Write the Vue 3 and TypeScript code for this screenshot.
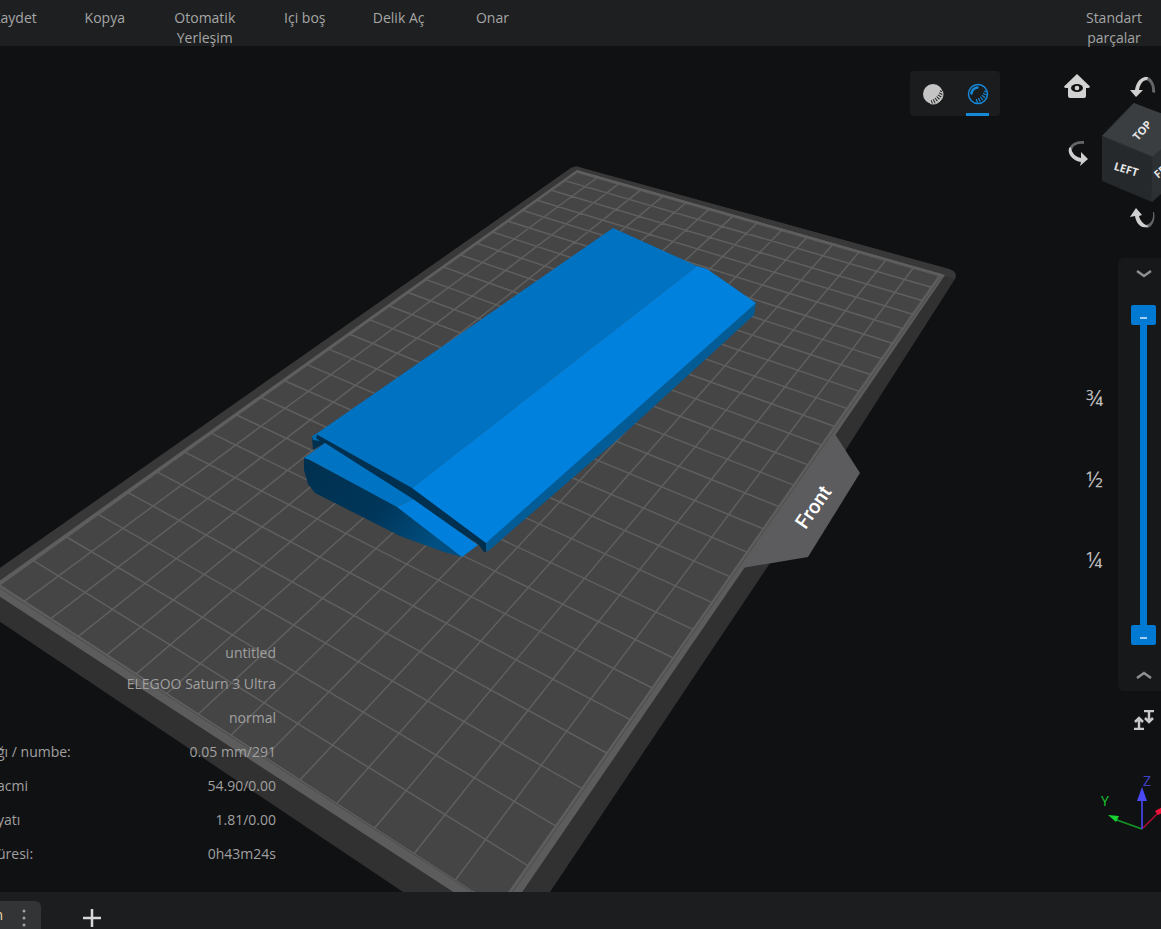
<script setup lang="ts">
import { computed, ref } from 'vue'

type Point = [number, number]

const tools = ['Kaydet', 'Kopya', 'Otomatik Yerleşim', 'Içi boş', 'Delik Aç', 'Onar']

const info = [
  { label: '', value: 'untitled' },
  { label: '', value: 'ELEGOO Saturn 3 Ultra' },
  { label: '', value: 'normal' },
  { label: 'ğı / numbe:', value: '0.05 mm/291' },
  { label: 'acmi', value: '54.90/0.00' },
  { label: 'yatı', value: '1.81/0.00' },
  { label: 'üresi:', value: '0h43m24s' },
]

const shading = ref<'solid' | 'glass'>('glass')
const upper = ref(291)
const lower = ref(0)

const trackStyle = computed(() => ({
  top: `${10 + (1 - upper.value / 291) * 320}px`,
  bottom: `${10 + (lower.value / 291) * 320}px`,
}))

// Build plate corners in view space: back, right, front, left
const plate: Point[] = [[577, 171], [942, 275], [498, 908], [-2, 585]]
const columns = 15
const rows = 27

// Projects a point of the unit square onto the plate
function project(u: number, v: number): Point {
  const [a, b, c, d] = plate
  const dx1 = b[0] - c[0]
  const dx2 = d[0] - c[0]
  const dx3 = a[0] - b[0] + c[0] - d[0]
  const dy1 = b[1] - c[1]
  const dy2 = d[1] - c[1]
  const dy3 = a[1] - b[1] + c[1] - d[1]
  const det = dx1 * dy2 - dx2 * dy1
  const g = (dx3 * dy2 - dx2 * dy3) / det
  const h = (dx1 * dy3 - dx3 * dy1) / det
  const w = g * u + h * v + 1
  return [
    ((b[0] - a[0] + g * b[0]) * u + (d[0] - a[0] + h * d[0]) * v + a[0]) / w,
    ((b[1] - a[1] + g * b[1]) * u + (d[1] - a[1] + h * d[1]) * v + a[1]) / w,
  ]
}

function segment(from: Point, to: Point): string {
  return `M${from[0].toFixed(1)} ${from[1].toFixed(1)}L${to[0].toFixed(1)} ${to[1].toFixed(1)}`
}

const gridPath = computed(() => {
  const parts: string[] = []
  for (let i = 0; i <= columns; i++) parts.push(segment(project(i / columns, 0), project(i / columns, 1)))
  for (let j = 0; j <= rows; j++) parts.push(segment(project(0, j / rows), project(1, j / rows)))
  return parts.join('')
})
</script>

<template>
  <div class="app">
    <header class="toolbar">
      <nav class="tools" aria-label="Araçlar">
        <button v-for="tool in tools" :key="tool" type="button" class="tool">{{ tool }}</button>
      </nav>
      <button type="button" class="tool parts">Standart parçalar</button>
    </header>

    <main class="viewport">
      <svg class="scene" viewBox="0 46 1161 846" preserveAspectRatio="xMidYMid slice" aria-hidden="true">
        <defs>
          <linearGradient id="side" x1="0" y1="0" x2="1" y2="0.5">
            <stop offset="0" stop-color="#00304f" />
            <stop offset="0.6" stop-color="#00365a" />
            <stop offset="1" stop-color="#004f80" />
          </linearGradient>
        </defs>
        <path d="M571 168Q576 165 582 168L949 269Q958 272 955 279L847 448L546 898L412 898L-10 615V575Z" fill="#313131" />
        <path d="M571 168Q576 165 582 168L949 269Q958 272 955 279L943 276L577 171L-2 586L-10 585V575Z" fill="#383838" />
        <path d="M577 170L945 275L501 923L-12 589Z" fill="#5c5c5c" />
        <path d="M577 173L938 276L498 908L1 585Z" fill="#454545" />
        <path :d="gridPath" stroke="#5f5f5f" stroke-width="1.5" fill="none" />
        <path d="M941 277L500 910L0 588" stroke="#4c4c4c" stroke-width="1" fill="none" />
        <path d="M835 434L860 473L808 557L742 568Z" fill="#5c5c5e" />
        <text class="front" text-anchor="middle" transform="translate(819 511) rotate(-55)">Front</text>

        <path d="M756 303L754 315L615 442L590 463L487 552L485 543Z" fill="#045c96" />
        <path d="M312 437L318 433L412 487L486 542V552H484L478 544L325 443L313 450Z" fill="#00304f" />
        <path d="M304 457L397 506L462 557L444 552L400 536L315 493L308 484L304 470Z" fill="url(#side)" />
        <path d="M325 443L304 458L310 460L397 507L413 499Z" fill="#0073c2" />
        <path d="M413 499L397 507L462 557L478 545Z" fill="#0080dc" />
        <path d="M613 228L697 266L412 488L316 434Z" fill="#0072c2" />
        <path d="M697 266L707 269L756 303L486 543L412 488Z" fill="#0081de" />
        <path d="M312 436L318 433L316 438L320 441L313 440Z" fill="#006baf" />
      </svg>

      <div class="shading" role="group" aria-label="Görünüm">
        <button type="button" :class="['mode', { active: shading === 'solid' }]" aria-label="Katı" @click="shading = 'solid'">
          <svg width="22" height="22" viewBox="0 0 22 22">
            <circle cx="11" cy="11" r="10" fill="#c4c4c4" />
            <path d="M20 8C18 14 14 18 8 19.500" fill="none" stroke="#1b1c1d" stroke-width="4" stroke-dasharray="1 1.500" />
            <path d="M20.500 8A10 10 0 0 1 8 20.500" fill="none" stroke="#c4c4c4" stroke-width="1" />
          </svg>
        </button>
        <button type="button" :class="['mode', { active: shading === 'glass' }]" aria-label="Saydam" @click="shading = 'glass'">
          <svg width="22" height="22" viewBox="0 0 22 22" fill="none" stroke="#1688d8">
            <circle cx="11" cy="11" r="9.500" stroke-width="1.500" />
            <path d="M4.500 10.500C5 7 7 5 10.500 4.500" stroke-width="2.500" stroke-linecap="round" />
            <path d="M19 8C17.500 13.500 14 17 8 18.500" stroke-width="4" stroke-dasharray="1.200 1.500" />
          </svg>
        </button>
      </div>

      <div class="navigator">
        <svg class="cube" width="100" height="140" viewBox="1061 70 100 140" aria-hidden="true">
          <path d="M1134 103L1102 136L1153 157L1190 124Z" fill="#3a3e40" />
          <path d="M1102 136V181L1152 202L1153 157Z" fill="#26292b" />
          <path d="M1153 157L1190 124V168L1152 202Z" fill="#2c3032" />
          <path d="M1134 103L1102 136L1153 157L1190 124M1153 157L1152 202" fill="none" stroke="#2f3335" />
          <text class="face" text-anchor="middle" transform="translate(1145 133) rotate(-48)">TOP</text>
          <text class="face" text-anchor="middle" transform="translate(1125 173) rotate(17)">LEFT</text>
          <text class="face" transform="translate(1158 179) rotate(-40)">FRONT</text>
        </svg>
        <button type="button" class="nav home" aria-label="Ana görünüm">
          <svg width="26" height="26" viewBox="0 0 26 26">
            <path d="M13 1L26 13.500Q25.500 15 24 15H22V23Q22 25 20 25H6Q4 25 4 23V15H2Q.500 15 0 13.500Z" fill="#d2d2d2" />
            <ellipse cx="13" cy="15" rx="6" ry="4" fill="#101113" />
            <circle cx="13" cy="15" r="2.300" fill="#d2d2d2" />
          </svg>
        </button>
        <button type="button" class="nav turn-up" aria-label="Yukarı döndür">
          <svg width="26" height="22" viewBox="0 0 26 22">
            <path d="M14 1C20 -1 26 7 25 17L22 16C23 9 19 3 14 4Z" fill="#666" />
            <path d="M5 14C6 6 11 0 18 1L17 4C13 4 10 8 9 14H13L6 21L0 14Z" fill="#d0d0d0" />
          </svg>
        </button>
        <button type="button" class="nav turn-left" aria-label="Sola döndür">
          <svg width="22" height="26" viewBox="0 0 22 26">
            <path d="M17 1C7 0 1 6 2 12L5 11C5 6 10 3 17 4Z" fill="#666" />
            <path d="M2 8C0 15 7 21 14 22L13 26L21 19L14 12V18C9 17 4 13 4 7Z" fill="#d0d0d0" />
          </svg>
        </button>
        <button type="button" class="nav turn-down" aria-label="Aşağı döndür">
          <svg width="26" height="22" viewBox="0 0 26 22">
            <path d="M24 4C26 12 22 20 16 20L15 17C20 17 24 12 23 4Z" fill="#666" />
            <path d="M6 0L12 7L9 8C10 13 14 17 19 18C11 22 6 15 5 8L0 9Z" fill="#d0d0d0" />
          </svg>
        </button>
      </div>

      <div class="layers">
        <div class="fractions" aria-hidden="true">
          <span>¾</span>
          <span>½</span>
          <span>¼</span>
        </div>
        <div class="layer-panel">
          <button type="button" class="step" aria-label="Katman aşağı">
            <svg width="16" height="8" viewBox="0 0 16 8"><path d="M1 1L8 6L15 1" fill="none" stroke="#909090" stroke-width="2.500" /></svg>
          </button>
          <div class="range">
            <span class="track" :style="trackStyle"></span>
            <input v-model.number="upper" type="range" min="0" max="291" aria-label="Üst katman" />
            <input v-model.number="lower" type="range" min="0" max="291" aria-label="Alt katman" />
          </div>
          <button type="button" class="step" aria-label="Katman yukarı">
            <svg width="16" height="8" viewBox="0 0 16 8"><path d="M1 7L8 2L15 7" fill="none" stroke="#909090" stroke-width="2.500" /></svg>
          </button>
        </div>
      </div>

      <button type="button" class="nav flip" aria-label="Aralığı değiştir">
        <svg width="20" height="20" viewBox="0 0 20 20" fill="none" stroke="#c8c8c8" stroke-width="2.500">
          <path d="M0 19H10M5 19V9M1 12L5 8L9 12M10 1H20M15 1V11M11 8L15 12L19 8" />
        </svg>
      </button>

      <svg class="axes" width="66" height="66" viewBox="1095 768 66 66" aria-hidden="true">
        <path d="M1142 829L1114 819" stroke="#159a28" stroke-width="1.500" />
        <path d="M1108 815L1119 816L1116 822Z" fill="#18d233" />
        <path d="M1142 829L1158 813" stroke="#b00c35" stroke-width="1.500" />
        <path d="M1155 811L1164 806V812L1158 815Z" fill="#f01238" />
        <path d="M1142 829V800" stroke="#3d3dc8" stroke-width="2" />
        <path d="M1142 787L1147 801H1137Z" fill="#4a4af5" />
        <text class="axis" x="1101" y="806" fill="#18c830">Y</text>
        <text class="axis" x="1143" y="786" fill="#4040c8">Z</text>
      </svg>

      <dl class="info">
        <div v-for="row in info" :key="row.value" class="row">
          <dt>{{ row.label }}</dt>
          <dd>{{ row.value }}</dd>
        </div>
      </dl>
    </main>

    <footer class="tabs">
      <div class="tab">
        <span class="tab-name">n</span>
        <button type="button" class="more" aria-label="Sekme menüsü">
          <svg width="4" height="20" viewBox="0 0 4 20" fill="#a0a0a0">
            <circle cx="2" cy="3" r="1.500" /><circle cx="2" cy="10" r="1.500" /><circle cx="2" cy="17" r="1.500" />
          </svg>
        </button>
      </div>
      <button type="button" class="add" aria-label="Yeni sekme">
        <svg width="18" height="18" viewBox="0 0 18 18"><path d="M9 0V18M0 9H18" stroke="#d8d8d8" stroke-width="2.500" /></svg>
      </button>
    </footer>
  </div>
</template>

<style>
body {
  margin: 0;
  background: #101113;
}
</style>

<style scoped>
.app {
  display: flex;
  flex-direction: column;
  height: 100vh;
  min-height: 880px;
  overflow: hidden;
  background: #101113;
  color: #a6a6a6;
  font: 14px/20px 'Open Sans', 'Noto Sans', sans-serif;
}

button {
  padding: 0;
  border: 0;
  background: none;
  color: inherit;
  font: inherit;
  cursor: pointer;
}

svg {
  display: block;
}

.toolbar {
  display: flex;
  flex: none;
  align-items: flex-start;
  justify-content: space-between;
  box-sizing: border-box;
  height: 46px;
  padding: 8px 15px 0 0;
  background: #1d1f20;
}

.tools {
  display: flex;
  align-items: flex-start;
  gap: 46px;
  margin-left: -8px;
}

.tool {
  min-width: 44px;
  max-width: 64px;
  text-align: center;
}

.viewport {
  position: relative;
  flex: 1;
  overflow: hidden;
}

.scene {
  position: absolute;
  width: 100%;
  height: 100%;
}

.front {
  fill: #fff;
  font: 500 20px Roboto, sans-serif;
}

.shading {
  position: absolute;
  top: 25px;
  right: 161px;
  display: flex;
  width: 90px;
  height: 45px;
  border-radius: 4px;
  background: #1b1c1d;
}

.mode {
  display: flex;
  flex: 1;
  flex-direction: column;
  align-items: center;
  padding-top: 12px;
}

.mode.active::after {
  width: 23px;
  height: 3px;
  margin-top: 8px;
  background: #1688d8;
  content: '';
}

.navigator {
  position: absolute;
  top: 24px;
  right: 0;
  width: 100px;
  height: 170px;
}

.cube {
  position: absolute;
  top: 0;
  left: 0;
}

.face {
  fill: #e4e4e4;
  font: 700 11px 'Open Sans', sans-serif;
}

.nav {
  position: absolute;
}

.home {
  top: 3px;
  left: 3px;
}

.turn-up {
  top: 6px;
  left: 69px;
}

.turn-left {
  top: 70px;
  left: 6px;
}

.turn-down {
  top: 138px;
  left: 69px;
}

.layers {
  position: absolute;
  top: 212px;
  right: 0;
  display: flex;
  align-items: flex-start;
  gap: 15px;
}

.fractions {
  display: grid;
  grid-auto-rows: 81px;
  align-items: center;
  margin-top: 98px;
  color: #bdbdbd;
  font-size: 22px;
}

.layer-panel {
  display: flex;
  flex-direction: column;
  align-items: center;
  box-sizing: border-box;
  width: 43px;
  padding-left: 8px;
  border-radius: 6px 0 0 6px;
  background: #171819;
}

.step {
  display: grid;
  place-items: center;
  width: 25px;
  height: 32px;
}

.range {
  position: relative;
  align-self: flex-start;
  width: 25px;
  height: 340px;
  margin: 15px 5px 14px;
}

.track {
  position: absolute;
  left: 9px;
  width: 7px;
  background: #0079d3;
}

.range input {
  position: absolute;
  inset: 0;
  width: 25px;
  height: 340px;
  margin: 0;
  appearance: none;
  background: none;
  direction: rtl;
  pointer-events: none;
  writing-mode: vertical-lr;
}

.range input::-webkit-slider-thumb {
  width: 25px;
  height: 20px;
  border-radius: 2px;
  appearance: none;
  background: linear-gradient(#9fd0f5, #9fd0f5) 9px 12px / 7px 2px no-repeat #0079d3;
  pointer-events: auto;
}

.flip {
  top: 664px;
  right: 7px;
}

.axes {
  position: absolute;
  top: 722px;
  right: 0;
}

.axis {
  font: 14px 'Open Sans', sans-serif;
}

.info {
  position: absolute;
  bottom: 21px;
  left: -3px;
  width: 279px;
  margin: 0;
  color: #a0a0a0;
}

.row {
  display: flex;
  justify-content: space-between;
  line-height: 34px;
}

.row:first-child {
  line-height: 28px;
}

dd {
  margin: 0 0 0 auto;
}

.tabs {
  display: flex;
  flex: none;
  align-items: flex-end;
  height: 37px;
  background: #1c1d1f;
}

.tab {
  display: flex;
  align-items: center;
  justify-content: flex-end;
  width: 41px;
  height: 28px;
  border-radius: 0 6px 0 0;
  background: #323436;
}

.tab-name {
  width: 10px;
  margin-right: 19px;
  color: #f0dca8;
  line-height: 32px;
  text-align: right;
}

.more {
  margin-right: 15px;
  margin-top: 6px;
}

.add {
  margin: 0 0 2px 42px;
}
</style>
